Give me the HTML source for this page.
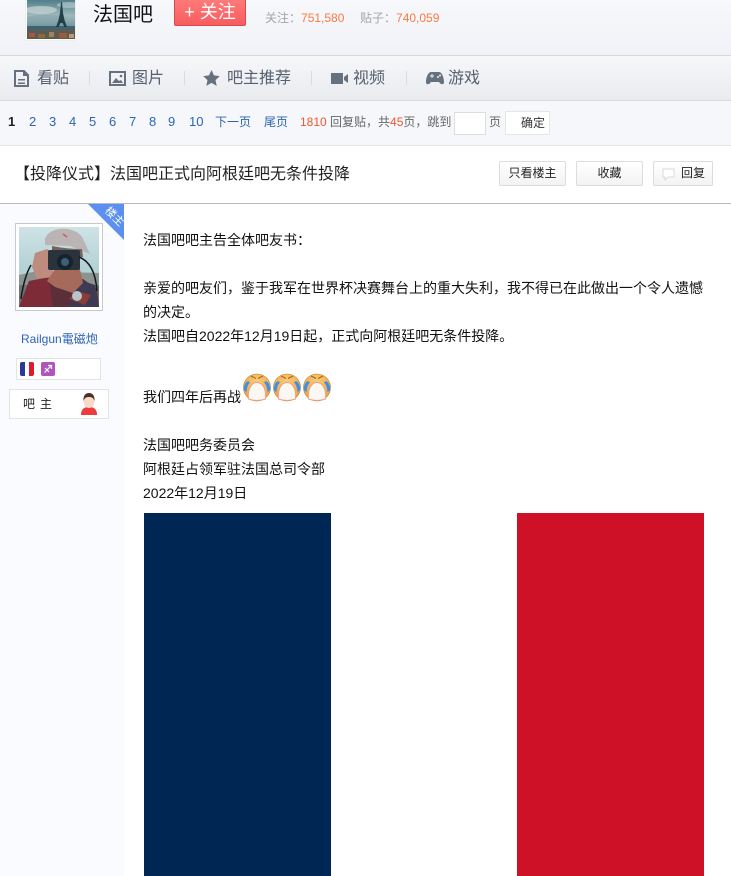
<!DOCTYPE html>
<html lang="zh"><head><meta charset="utf-8"><style>
*{box-sizing:border-box}
html,body{margin:0;padding:0}
body{width:731px;height:876px;position:relative;overflow:hidden;background:#fff;font-family:"Liberation Sans","WenQuanYi Zen Hei","Noto Sans CJK SC",sans-serif;color:#222;font-size:14px}
.a{position:absolute;white-space:nowrap}
.nav{font-size:16px;color:#56606f;top:68px;line-height:20px}
.sep{position:absolute;top:71px;width:1px;height:14px;background:#d9dbdf}
.p{position:absolute;top:114px;font-size:12px;line-height:16px;color:#2d64b3;white-space:nowrap}
.d{font-size:13px}
.btn{position:absolute;top:161px;height:25px;border:1px solid #dcdcdc;border-radius:2px;background:linear-gradient(#fff,#f3f3f3);font-size:12px;line-height:23px;text-align:center;color:#222;white-space:nowrap}
.t{position:absolute;left:143px;font-size:14px;line-height:20px;color:#111;white-space:nowrap}
</style></head><body>
<div class="a" style="left:0;top:0;width:731px;height:56px;background:linear-gradient(#f7f8fb,#f1f2f7);border-bottom:1px solid #d7d8dc"></div>
<div class="a" style="left:25px;top:0;width:51px;height:41px;background:#fff;border:1px solid #eee;border-top:0;padding:0 1px 1px 1px">
<svg width="48" height="39" viewBox="0 0 48 39" style="display:block">
<defs><linearGradient id="s" x1="0" y1="0" x2="0" y2="1"><stop offset="0" stop-color="#4f7f8c"/><stop offset=".4" stop-color="#9fb9bd"/><stop offset=".7" stop-color="#6e929b"/></linearGradient></defs>
<rect width="48" height="39" fill="url(#s)"/>
<ellipse cx="14" cy="10" rx="16" ry="4" fill="#c4d2d2" opacity=".75"/><ellipse cx="42" cy="5" rx="12" ry="3" fill="#bdd0d2" opacity=".6"/><ellipse cx="20" cy="18" rx="20" ry="3" fill="#88a6ad" opacity=".7"/>
<rect y="26" width="48" height="6" fill="#3f626c"/><rect y="30" width="48" height="9" fill="#5d5a52"/>
<rect x="2" y="33" width="6" height="4" fill="#a5583d"/><rect x="11" y="34" width="7" height="4" fill="#8b6a3a"/><rect x="22" y="32" width="5" height="5" fill="#a4805a"/><rect x="32" y="33" width="8" height="5" fill="#9c5a3a"/><rect x="42" y="34" width="5" height="4" fill="#b9987a"/>
<path d="M34 2 L35 2 L36 13 L37.500 20 L40 27 L37.500 27 L35.500 23 L33.500 23 L31.500 27 L29 27 L31.500 20 L33 13Z" fill="#22404a"/></svg></div>
<div class="a" style="left:93px;top:2px;width:70px;font-size:20px;line-height:26px;color:#111">法国吧</div>
<div class="a" style="left:174px;top:-2px;width:72px;height:28px;background:linear-gradient(#ff7b7b,#f85c5f);border:1px solid #d94a4d;border-radius:2px;color:#fff;font-size:18px;line-height:27px;text-align:center">+ 关注</div>
<div class="a" style="left:265px;top:10px;font-size:12px;line-height:16px;color:#a5a5a5">关注：<span style="color:#fb7a42">751,580</span></div>
<div class="a" style="left:360px;top:10px;font-size:12px;line-height:16px;color:#a5a5a5">贴子：<span style="color:#fb7a42">740,059</span></div>

<div class="a" style="left:0;top:56px;width:731px;height:45px;background:linear-gradient(#f6f7f9,#e9ebef);border-bottom:1px solid #d9dade"></div>
<svg class="a" style="left:14px;top:70px" width="15" height="17" viewBox="0 0 15 17"><path d="M1 1h9l4 4v11H1z" fill="none" stroke="#67707f" stroke-width="2"/><path d="M9 1v5h5M4 9h7v1.500H4zM4 12.500h7V14H4z" fill="#67707f"/></svg>
<div class="a nav" style="left:37px;top:69px">看贴</div><div class="sep" style="left:89px"></div>
<svg class="a" style="left:109px;top:71px" width="17" height="15" viewBox="0 0 17 15"><rect x="1" y="1" width="15" height="13" fill="none" stroke="#67707f" stroke-width="2"/><path d="M3 12l4-5 3 3 2-1 2 3z" fill="#67707f"/><circle cx="12" cy="5" r="1.300" fill="#67707f"/></svg>
<div class="a nav" style="left:132px;top:69px">图片</div><div class="sep" style="left:184px"></div>
<svg class="a" style="left:203px;top:70px" width="17" height="16" viewBox="0 0 17 16"><path d="M8.500 0l2.500 5.400 5.800.7-4.300 4 1.200 5.800-5.200-3-5.200 3 1.200-5.800-4.300-4 5.800-.7z" fill="#67707f"/></svg>
<div class="a nav" style="left:227px;top:69px">吧主推荐</div><div class="sep" style="left:311px"></div>
<svg class="a" style="left:331px;top:72px" width="17" height="13" viewBox="0 0 17 13"><rect x="0" y="1" width="12" height="11" fill="#67707f"/><path d="M13 5l4-3v9l-4-3z" fill="#67707f"/></svg>
<div class="a nav" style="left:353px;top:69px">视频</div><div class="sep" style="left:406px"></div>
<svg class="a" style="left:426px;top:71px" width="18" height="14" viewBox="0 0 18 14"><path d="M5 1h8c3 0 5 6 5 10 0 3-3 3-5 0H5c-2 3-5 3-5 0C0 7 2 1 5 1z" fill="#67707f"/><path d="M4 4.500h1.500V3h1v1.500H8v1H6.500V7h-1V5.500H4z" fill="#eceef1"/><circle cx="12" cy="6" r="1" fill="#eceef1"/><circle cx="14" cy="4.500" r="1" fill="#eceef1"/></svg>
<div class="a nav" style="left:448px;top:69px">游戏</div>

<div class="a" style="left:0;top:101px;width:731px;height:45px;background:#f5f7fb;border-bottom:1px solid #e3e4e8"></div>
<div class="p d" style="left:8px;color:#222;font-weight:bold">1</div>
<div class="p d" style="left:29px">2</div><div class="p d" style="left:49px">3</div><div class="p d" style="left:69px">4</div><div class="p d" style="left:89px">5</div><div class="p d" style="left:109px">6</div><div class="p d" style="left:129px">7</div><div class="p d" style="left:149px">8</div><div class="p d" style="left:168px">9</div><div class="p d" style="left:189px">10</div>
<div class="p" style="left:215px">下一页</div><div class="p" style="left:264px">尾页</div>
<div class="p" style="left:300px;color:#666;top:114px"><span style="color:#f4562d">1810</span> 回复贴，共<span style="color:#f4562d">45</span>页，跳到</div>
<div class="a" style="left:454px;top:112px;width:32px;height:23px;background:#fff;border:1px solid #ddd"></div>
<div class="p" style="left:489px;color:#666;top:114px">页</div>
<div class="a" style="left:505px;top:111px;width:45px;height:24px;background:#fff;border:1px solid #e6e6e6;font-size:12px;line-height:22px;color:#333;padding-left:15px">确定</div>

<div class="a" style="left:14px;top:165px;font-size:16px;line-height:20px;color:#222">【投降仪式】法国吧正式向阿根廷吧无条件投降</div>
<div class="btn" style="left:499px;width:67px">只看楼主</div>
<div class="btn" style="left:576px;width:67px">收藏</div>
<div class="btn" style="left:653px;width:60px;padding-left:20px">回复</div>
<svg class="a" style="left:662px;top:168px" width="13" height="13" viewBox="0 0 13 13"><path d="M1 1h11v8H6l-3 3V9H1z" fill="#fff" stroke="#d8d8d8"/></svg>
<div class="a" style="left:0;top:203px;width:731px;height:1px;background:#b9b9b9"></div>

<div class="a" style="left:0;top:204px;width:124px;height:672px;background:#fafbfe"></div>
<svg class="a" style="left:88px;top:204px" width="36" height="36" viewBox="0 0 36 36"><path d="M0 0h36v36z" fill="#5b8ff0"/><text x="24" y="15" font-size="11" fill="#fff" text-anchor="middle" transform="rotate(45 24 15)" font-family="Liberation Sans,WenQuanYi Zen Hei,sans-serif">楼主</text></svg>
<div class="a" style="left:15px;top:223px;width:88px;height:88px;background:#fff;border:1px solid #c9c9c9;padding:3px">
<svg width="80" height="80" viewBox="0 0 80 80" style="display:block">
<defs><linearGradient id="b" x1="0" y1="0" x2="0" y2="1"><stop offset="0" stop-color="#cfe3e6"/><stop offset=".5" stop-color="#b4d2d6"/></linearGradient></defs>
<rect width="80" height="80" fill="url(#b)"/>
<path d="M0 48l18-4 62 2v14H0z" fill="#8b9490"/><path d="M0 58h80v22H0z" fill="#6e7478"/>
<path d="M20 80V56l16-6 28 2 14 10 2 18z" fill="#5a2f3a"/><path d="M0 80l10-26 20-4 4 30z" fill="#7d2b36"/><path d="M58 52l18 6 4 22H50z" fill="#3f3a54"/>
<path d="M26 12C30-2 60-2 65 14l6 13-20-8-25-1z" fill="#bab4b4"/><path d="M44 7l4 3" stroke="#c4606a" stroke-width="1.500"/>
<path d="M33 19q15 3 30 3l1 8H33z" fill="#75635c"/>
<path d="M16 26l12-4 6 4v24l-16 2-5-12z" fill="#bd8c7f"/>
<path d="M36 42l24-4 4 18-10 10-18-6-8-6z" fill="#a56a5c"/>
<rect x="29" y="23" width="32" height="20" rx="2" fill="#2a333b"/><circle cx="46" cy="35" r="8" fill="#16232c"/><circle cx="46" cy="35" r="4" fill="#3c6074"/>
<path d="M60 30q16 6 18 34M12 38Q5 50 2 72" fill="none" stroke="#15181c" stroke-width="1.500"/>
<path d="M50 72l8-8 14 4-6 10z" fill="#8a3d36"/><circle cx="58" cy="69" r="5" fill="#b8c6cc"/></svg></div>
<div class="a" style="left:21px;top:331px;font-size:12px;line-height:16px;color:#2d64b3">Railgun電磁炮</div>
<div class="a" style="left:16px;top:358px;width:85px;height:22px;background:#fff;border:1px solid #e3e3e3"></div>
<div class="a" style="left:20px;top:362px;width:5px;height:14px;background:#2b3a96;border-radius:2px 0 0 2px"></div>
<div class="a" style="left:25px;top:362px;width:4px;height:14px;background:#fff"></div>
<div class="a" style="left:29px;top:362px;width:5px;height:14px;background:#dc1b2e;border-radius:0 2px 2px 0"></div>
<svg class="a" style="left:41px;top:362px" width="14" height="14" viewBox="0 0 14 14"><rect width="14" height="14" rx="2" fill="#b055bd"/><path d="M3.500 10.500L10.500 3.500M7 3.500h3.500V7M4 6l4 4" fill="none" stroke="#fff" stroke-width="1.200"/></svg>
<div class="a" style="left:9px;top:389px;width:100px;height:30px;background:#fff;border:1px solid #e3e3e3"></div>
<div class="a" style="left:23px;top:396px;font-size:12px;line-height:16px;color:#222;letter-spacing:5px">吧主</div>
<svg class="a" style="left:80px;top:392px" width="18" height="24" viewBox="0 0 18 24"><path d="M1 23c0-6 3-8 8-8s8 2 8 8z" fill="#ee3b3f"/><ellipse cx="9" cy="9" rx="5.500" ry="7" fill="#f7d9c9"/><path d="M3.500 9C3 3 6 1 9 1s6 2 5.500 8C13 5 11 5 9 5S5 5 3.500 9z" fill="#4a3027"/></svg>

<div class="t" style="top:230px">法国吧吧主告全体吧友书：</div>
<div class="t" style="top:278px">亲爱的吧友们，鉴于我军在世界杯决赛舞台上的重大失利，我不得已在此做出一个令人遗憾</div>
<div class="t" style="top:302px">的决定。</div>
<div class="t" style="top:326px">法国吧自2022年12月19日起，正式向阿根廷吧无条件投降。</div>
<div class="t" style="top:387px">我们四年后再战</div>
<svg class="a" style="left:242px;top:372px" width="90" height="30" viewBox="0 0 90 30">
<defs><radialGradient id="o" cx=".5" cy=".3" r=".8"><stop offset="0" stop-color="#f8cd7a"/><stop offset="1" stop-color="#ee9a35"/></radialGradient>
<g id="e"><circle cx="15" cy="15.500" r="13.500" fill="url(#o)" stroke="#b98233" stroke-width=".6"/><path d="M6.500 27c-1-10 3-16.500 8.500-16.500S24.500 17 23.500 27Q15 30 6.500 27z" fill="#fbf7f3" stroke="#ef9f80"/><path d="M1.500 18Q2 11 6 9l2 1.500Q5 13 4.500 20z M28.500 18q-.5-7-4.500-9l-2 1.500q3 2.500 3.500 9.500z" fill="#3f8fe6"/><path d="M9 4l5 2.500M21 4l-5 2.500" stroke="#9c6420" stroke-width="1"/></g></defs>
<use href="#e"/><use href="#e" x="30"/><use href="#e" x="60"/></svg>
<div class="t" style="top:435px">法国吧吧务委员会</div>
<div class="t" style="top:459px">阿根廷占领军驻法国总司令部</div>
<div class="t" style="top:483px">2022年12月19日</div>

<div class="a" style="left:144px;top:513px;width:187px;height:363px;background:#002654"></div>
<div class="a" style="left:517px;top:513px;width:187px;height:363px;background:#ce1126"></div>
</body></html>
